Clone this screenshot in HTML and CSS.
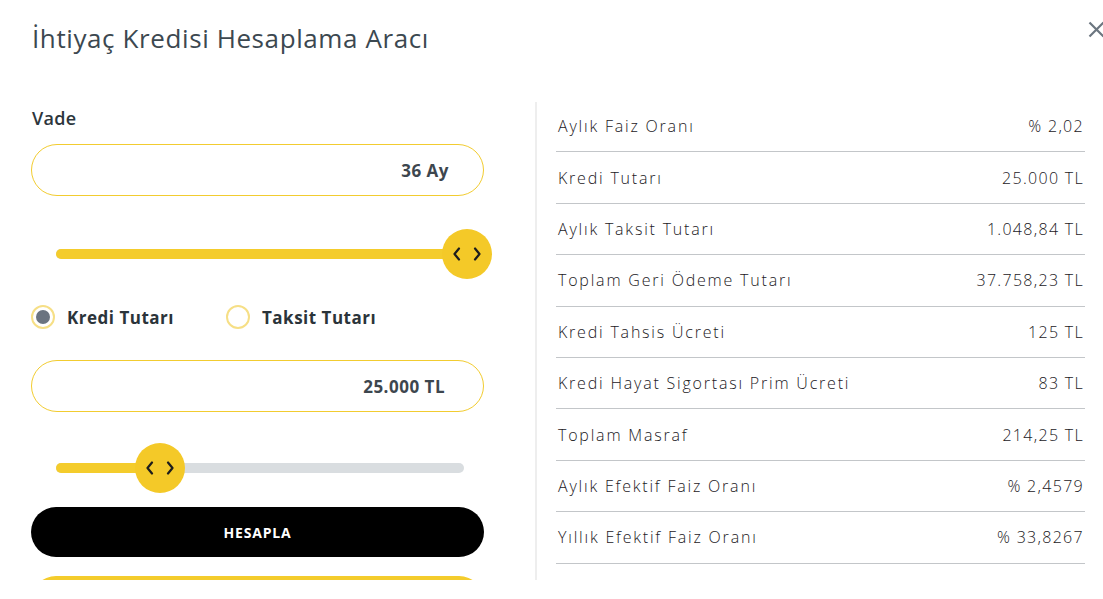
FILE: index.html
```html
<!DOCTYPE html>
<html lang="tr">
<head>
    <meta charset="UTF-8">
    <meta name="viewport" content="width=device-width, initial-scale=1.0">
    <title>İhtiyaç Kredisi Hesaplama Aracı</title>
    <link rel="stylesheet" href="styles.css">
</head>
<body>

<div class="modal">
    <div class="modal-header">
        <h2 class="title">İhtiyaç Kredisi Hesaplama Aracı</h2>
        <button class="close-button" aria-label="Kapat">
            <svg width="17" height="17" viewBox="0 0 17 17">
                <path d="M1.5 1.5 L15.5 15.5 M15.5 1.5 L1.5 15.5" stroke="#6c7680" stroke-width="2.2" fill="none"/>
            </svg>
        </button>
    </div>

    <div class="calc">
        <div class="calc-form">
            <div class="field-label">Vade</div>
            <div class="pill-input">36 Ay</div>
            <div class="slider">
                <div class="track">
                    <div class="fill" style="width: 100%"></div>
                    <div class="thumb" style="left: 100%">
                        <svg width="28" height="14" viewBox="0 0 28 14">
                            <path d="M6 1.5 L1.5 7 L6 12.5 M22 1.5 L26.5 7 L22 12.5" stroke="#1d1d1d" stroke-width="2.2" fill="none" stroke-linecap="round" stroke-linejoin="round"/>
                        </svg>
                    </div>
                </div>
            </div>

            <div class="radio-row">
                <label class="radio checked"><span class="radio-dot"></span>Kredi Tutarı</label>
                <label class="radio"><span class="radio-dot"></span>Taksit Tutarı</label>
            </div>

            <div class="pill-input amount">25.000 TL</div>
            <div class="slider">
                <div class="track">
                    <div class="fill" style="width: 25.5%"></div>
                    <div class="thumb" style="left: 25.5%">
                        <svg width="28" height="14" viewBox="0 0 28 14">
                            <path d="M6 1.5 L1.5 7 L6 12.5 M22 1.5 L26.5 7 L22 12.5" stroke="#1d1d1d" stroke-width="2.2" fill="none" stroke-linecap="round" stroke-linejoin="round"/>
                        </svg>
                    </div>
                </div>
            </div>

            <button class="calc-button">HESAPLA</button>
            <button class="apply-button" aria-label="Başvur"></button>
        </div>

        <div class="calc-result">
            <div class="result-row"><span>Aylık Faiz Oranı</span><span class="value">% 2,02</span></div>
            <div class="result-row"><span>Kredi Tutarı</span><span class="value">25.000 TL</span></div>
            <div class="result-row"><span>Aylık Taksit Tutarı</span><span class="value">1.048,84 TL</span></div>
            <div class="result-row"><span>Toplam Geri Ödeme Tutarı</span><span class="value">37.758,23 TL</span></div>
            <div class="result-row"><span>Kredi Tahsis Ücreti</span><span class="value">125 TL</span></div>
            <div class="result-row"><span>Kredi Hayat Sigortası Prim Ücreti</span><span class="value">83 TL</span></div>
            <div class="result-row"><span>Toplam Masraf</span><span class="value">214,25 TL</span></div>
            <div class="result-row"><span>Aylık Efektif Faiz Oranı</span><span class="value">% 2,4579</span></div>
            <div class="result-row"><span>Yıllık Efektif Faiz Oranı</span><span class="value">% 33,8267</span></div>
        </div>
    </div>
</div>

</body>
</html>
```

FILE: styles.css
```css
html, body {
    overflow: hidden;
}
body {
    font-family: "Open Sans", Arial, sans-serif;
    background-color: #fff;
    margin: 0;
    color: #2b3136;
}
.modal {
    padding: 0 0 0 31px;
}
.modal-header {
    display: flex;
    justify-content: space-between;
    align-items: flex-start;
    height: 100px;
}
.title {
    margin: 18px 0 0 1px;
    font-size: 26px;
    font-weight: 400;
    line-height: 40px;
    color: #3c4850;
    letter-spacing: 0.6px;
}
.close-button {
    border: none;
    background: none;
    padding: 0;
    margin: 21px -2px 0 0;
    width: 17px;
    height: 17px;
    cursor: pointer;
}
.calc {
    display: flex;
    height: 480px;
    overflow: hidden;
}
.calc-form {
    width: 453px;
    flex-shrink: 0;
    padding-top: 6px;
}
.field-label {
    font-size: 18px;
    font-weight: 600;
    line-height: 24px;
    color: #2d363c;
    margin: 0 0 14px 1px;
    letter-spacing: 0.3px;
}
.pill-input {
    height: 50px;
    border: 1px solid #f2cc30;
    border-radius: 26px;
    padding-right: 34px;
    display: flex;
    align-items: center;
    justify-content: flex-end;
    font-size: 17px;
    font-weight: 700;
    letter-spacing: 0.5px;
    color: #3d464e;
}
.pill-input.amount {
    padding-right: 38px;
    margin-top: 31px;
}
.slider {
    height: 50px;
    padding: 0 17px 0 25px;
    margin-top: 33px;
    display: flex;
    align-items: center;
}
.pill-input.amount + .slider {
    margin-top: 31px;
    padding-right: 20px;
}
.track {
    position: relative;
    flex: 1;
    height: 10px;
    border-radius: 5px;
    background-color: #d9dde0;
}
.fill {
    height: 100%;
    border-radius: 5px;
    background-color: #f4cc2c;
}
.thumb {
    position: absolute;
    top: 50%;
    width: 50px;
    height: 50px;
    margin: -25px 0 0 -25px;
    border-radius: 50%;
    background-color: #f4c928;
    display: flex;
    align-items: center;
    justify-content: center;
}
.radio-row {
    display: flex;
    gap: 52px;
    margin-top: 26px;
}
.radio {
    display: flex;
    align-items: center;
    gap: 12px;
    font-size: 17px;
    font-weight: 700;
    letter-spacing: 0.5px;
    color: #2b343a;
    cursor: pointer;
}
.radio-dot {
    width: 20px;
    height: 20px;
    border: 2px solid #f6df86;
    border-radius: 50%;
    display: flex;
    align-items: center;
    justify-content: center;
}
.radio.checked .radio-dot::after {
    content: "";
    width: 14px;
    height: 14px;
    border-radius: 50%;
    background-color: #6b7480;
}
.calc-button, .apply-button {
    display: block;
    width: 100%;
    height: 50px;
    border: none;
    border-radius: 25px;
    font-family: "Open Sans", Arial, sans-serif;
    font-size: 14px;
    font-weight: 700;
    letter-spacing: 0.8px;
    cursor: pointer;
}
.calc-button {
    margin-top: 14px;
    background-color: #000;
    color: #fff;
}
.apply-button {
    margin-top: 19px;
    background-color: #f4cc2c;
}
.calc-result {
    width: 529px;
    margin-left: 51px;
    border-left: 2px solid #eeeeee;
    padding-left: 19px;
    margin-top: 2px;
}
.result-row {
    height: 50.4px;
    border-bottom: 1px solid #c3c6c9;
    display: flex;
    align-items: center;
    justify-content: space-between;
    padding: 0 1px 0 2px;
    font-size: 16px;
    font-weight: 300;
    letter-spacing: 1.8px;
    color: #1c2024;
}
.result-row:first-child {
    margin-top: -1px;
}
.result-row .value {
    letter-spacing: 1.3px;
}
```
